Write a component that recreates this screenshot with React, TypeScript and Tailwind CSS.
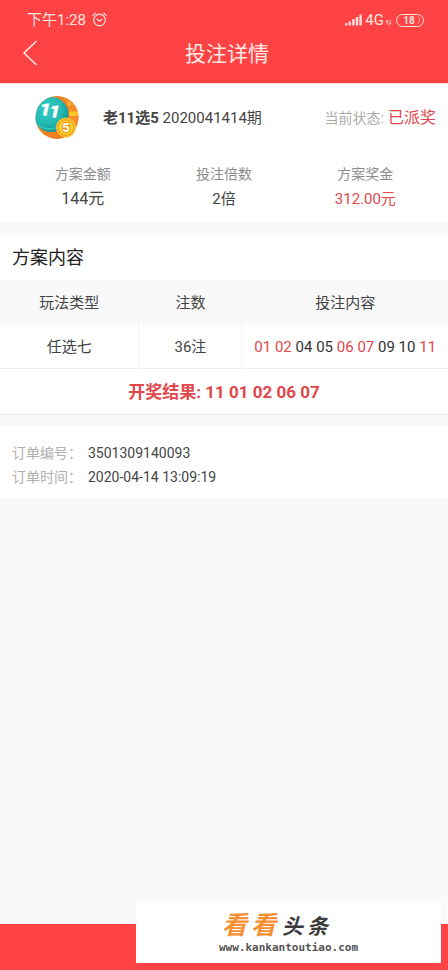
import React from "react";

const numbers = [
  { value: "01", hit: true },
  { value: "02", hit: true },
  { value: "04", hit: false },
  { value: "05", hit: false },
  { value: "06", hit: true },
  { value: "07", hit: true },
  { value: "09", hit: false },
  { value: "10", hit: false },
  { value: "11", hit: true },
];

const StatusBar = () => {
  return (
    <div className="flex h-10 items-center justify-between pl-[27px] pr-6 text-[#ffe3de]">
      <div className="flex items-center gap-1.5 text-[15px]">
        <span>下午1:28</span>
        <svg className="h-4 w-4" viewBox="0 0 16 16" fill="none" stroke="currentColor" strokeWidth="1.2" strokeLinecap="round" aria-hidden="true">
          <circle cx="7.5" cy="8" r="5.8" />
          <path d="M5 7.2l2.5 2L10 7.2M0.9 3.4l2.3-2.2M14.1 3.4l-2.3-2.2" />
        </svg>
      </div>
      <div className="flex items-center">
        <svg className="h-3 w-[17px]" viewBox="0 0 17 12" fill="currentColor" aria-hidden="true">
          <rect x="0" y="9" width="2.4" height="2.4" rx="0.6" />
          <rect x="3.6" y="7.4" width="2.4" height="4" rx="0.6" />
          <rect x="7.2" y="5" width="2.4" height="6.4" rx="0.6" />
          <rect x="10.8" y="3" width="2.4" height="8.4" rx="0.6" />
          <rect x="14.4" y="0.4" width="2.4" height="11" rx="0.6" />
        </svg>
        <span className="ml-[3px] text-[15px]">4G</span>
        <svg className="ml-px h-3 w-2" viewBox="0 0 8 12" fill="none" stroke="currentColor" strokeWidth="1.1" opacity="0.8" aria-hidden="true">
          <path d="M2.8 6L1.8 10.5M1 7.4l1.8-1.4M5.4 6L4.4 10.5l1.8-1.4" />
        </svg>
        <span className="ml-[3px] flex h-[13px] w-7 items-center justify-center gap-0.5 rounded-full border border-current pl-1 text-[10px] font-bold">
          18
          <svg className="h-2 w-1" viewBox="0 0 4 8" fill="none" stroke="currentColor" strokeWidth="1" opacity="0.6" aria-hidden="true">
            <path d="M1 0.5c2 2 2 5 0 7" />
          </svg>
        </span>
      </div>
    </div>
  );
};

const LotteryLogo = () => {
  return (
    <svg className="h-11 w-11 shrink-0" viewBox="0 0 44 44" role="img" aria-label="11选5">
      <defs>
        <radialGradient id="ball" cx="0.4" cy="0.35" r="0.65">
          <stop offset="0" stopColor="#35ccc3" />
          <stop offset="0.65" stopColor="#20b8b0" />
          <stop offset="1" stopColor="#0c9791" />
        </radialGradient>
        <clipPath id="disc">
          <circle cx="22" cy="21.5" r="21.5" />
        </clipPath>
      </defs>
      <g clipPath="url(#disc)">
        <rect width="44" height="44" fill="#f07f22" />
        <path d="M27 0c7 6 9 20 4 30L44 26V0z" fill="#f58f2c" />
        <circle cx="16" cy="18.5" r="17.5" fill="url(#ball)" />
        <path d="M1 26c5 8 18 10 26 2" fill="none" stroke="#3fd0c4" strokeWidth="2" opacity="0.6" />
        <rect x="34" y="15.5" width="9" height="4.4" rx="2.2" fill="#ffc928" />
        <circle cx="34" cy="8" r="2" fill="#ffb02e" />
      </g>
      <text x="5" y="20" transform="rotate(12 13 15)" fill="#fff" stroke="#fff" strokeWidth="0.6" fontFamily="Roboto, sans-serif" fontSize="17" fontWeight="900">
        11
      </text>
      <circle cx="31" cy="31.5" r="10" fill="#fcc02a" />
      <circle cx="31" cy="31.5" r="7.8" fill="#ffd02e" stroke="#ee9a18" strokeWidth="1" />
      <text x="31" y="36.3" textAnchor="middle" fill="#fffbe6" stroke="#e98a10" strokeWidth="1.6" paintOrder="stroke" fontFamily="Roboto, sans-serif" fontSize="13" fontWeight="900">
        5
      </text>
    </svg>
  );
};

const Stat = ({ label, value, className }: { label: string; value: string; className: string }) => {
  return (
    <div className="text-center">
      <dt className="text-sm leading-6 text-[#8c8c8c]">{label}</dt>
      <dd className={`leading-[26px] ${className}`}>{value}</dd>
    </div>
  );
};

const App = () => {
  return (
    <div className="relative flex min-h-screen flex-col bg-[#f9f9f9] font-[Roboto,'Noto_Sans_CJK_SC',sans-serif] text-[#444]">
      <header className="border-b border-[#ffd9c9] bg-[#ff4344]">
        <StatusBar />
        <div className="grid h-[43px] grid-cols-[1fr_auto_1fr] items-start text-[#ffe9e4]">
          <button type="button" aria-label="返回" className="ml-[22px] h-7 w-4">
            <svg className="h-7 w-4" viewBox="0 0 16 28" fill="none" stroke="currentColor" strokeWidth="1.6" strokeLinecap="round" strokeLinejoin="round">
              <path d="M14 1.5L2 13l12 11.5" />
            </svg>
          </button>
          <h1 className="pl-1.5 text-[21px] leading-7">投注详情</h1>
        </div>
      </header>

      <section className="bg-white px-3 pb-2.5">
        <div className="flex h-[68px] items-center">
          <div className="ml-[23px]">
            <LotteryLogo />
          </div>
          <p className="ml-6 text-[15px] whitespace-nowrap">
            <b>老11选5</b> 2020041414期
          </p>
          <p className="ml-auto flex items-center whitespace-nowrap">
            <span className="text-sm text-[#aaa]">当前状态:</span>
            <span className="ml-1 text-base text-[#e2474b]">已派奖</span>
          </p>
        </div>
        <dl className="mt-2.5 grid grid-cols-3">
          <Stat label="方案金额" value="144元" className="text-base" />
          <Stat label="投注倍数" value="2倍" className="text-[15px]" />
          <Stat label="方案奖金" value="312.00元" className="text-[15px] text-[#e2474b]" />
        </dl>
      </section>

      <section className="mt-[11px] border-b border-[#ebebeb] bg-white">
        <h2 className="px-3 pt-0.5 text-lg leading-[45px] text-[#222]">方案内容</h2>
        <table className="w-full table-fixed border-collapse text-center text-[15px]">
          <colgroup>
            <col className="w-[31%]" />
            <col className="w-[23%]" />
            <col className="w-[46%]" />
          </colgroup>
          <thead className="bg-[#f9f9f9]">
            <tr className="h-[45px]">
              <th className="border-r border-[#f3f3f3] pt-0.5 font-normal">玩法类型</th>
              <th className="border-r border-[#f3f3f3] pt-0.5 font-normal">注数</th>
              <th className="pt-0.5 font-normal">投注内容</th>
            </tr>
          </thead>
          <tbody>
            <tr className="h-[43px] border-b border-[#ebebeb]">
              <td className="border-r border-[#f7f7f7] pt-0.5">任选七</td>
              <td className="border-r border-[#f7f7f7] pt-0.5">36注</td>
              <td className="pt-0.5 whitespace-nowrap">
                {numbers.map((n, i) => (
                  <React.Fragment key={n.value}>
                    {i > 0 && " "}
                    <span className={n.hit ? "text-[#e2474b]" : "text-[#333]"}>{n.value}</span>
                  </React.Fragment>
                ))}
              </td>
            </tr>
          </tbody>
        </table>
        <p className="pt-0.5 text-center text-[17px] leading-[43px] font-bold text-[#e2474b]">
          开奖结果: 11 01 02 06 07
        </p>
      </section>

      <dl className="mt-[11px] grid grid-cols-[auto_1fr] gap-x-1.5 bg-white px-3 pt-[15px] pb-[9px] text-sm leading-6">
        <dt className="text-[#b0b0b0]">订单编号：</dt>
        <dd>3501309140093</dd>
        <dt className="text-[#b0b0b0]">订单时间：</dt>
        <dd>2020-04-14 13:09:19</dd>
      </dl>

      <footer className="mt-auto h-[46px] bg-[#ff4344]" />

      {/* site badge over the bottom bar */}
      <div className="absolute right-[7px] bottom-[7px] flex h-[63px] w-[305px] flex-col items-center justify-center gap-1 bg-white pt-1">
        <div className="flex w-[133px] items-end font-bold italic">
          <span className="flex gap-1 text-[25px] leading-6 text-[#f78f32]">
            <span>看</span>
            <span>看</span>
          </span>
          <span className="ml-1.5 flex gap-1 text-[21px] leading-[22px] text-[#3c3c3c]">
            <span>头</span>
            <span>条</span>
          </span>
        </div>
        <a href="#" className="font-['DejaVu_Sans_Mono',monospace] text-[11px] leading-3 font-bold text-[#555]">
          www.kankantoutiao.com
        </a>
      </div>
    </div>
  );
};

export default App;
